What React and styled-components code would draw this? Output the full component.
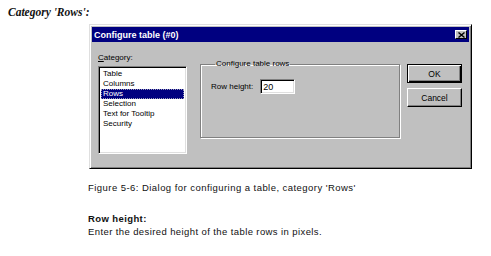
import React from 'react'
import styled, { createGlobalStyle } from 'styled-components'

const Global = createGlobalStyle`
  html, body { margin: 0; padding: 0; background: #fff; }
  body { width: 491px; height: 256px; overflow: hidden; }
`

const Page = styled.div`
  padding: 5px 0 0 8px;
`

const Heading = styled.div`
  font-family: "Liberation Serif", serif;
  font-weight: bold;
  font-style: italic;
  font-size: 11.5px;
  line-height: 15px;
  color: #111;
`

const Dialog = styled.div`
  margin: 4px 0 0 81px;
  width: 383px;
  height: 145px;
  box-sizing: border-box;
  background: #c0c0c0;
  border: 1px solid;
  border-color: #dfdfdf #000 #000 #dfdfdf;
  box-shadow: inset 1px 1px 0 #fff, inset -1px -1px 0 #808080;
  padding: 2px;
  font-family: "Liberation Sans", Arial, sans-serif;
  font-size: 8px;
  color: #000;
`

const TitleBar = styled.div`
  height: 15px;
  background: #000080;
  display: flex;
  align-items: center;
  justify-content: space-between;
  padding: 0 2px 0 2px;
`

const TitleText = styled.span`
  color: #fff;
  font-weight: bold;
  font-size: 9px;
`

const CloseBtn = styled.div`
  width: 12px;
  height: 9px;
  box-sizing: border-box;
  background: #c0c0c0;
  border: 1px solid;
  border-color: #fff #000 #000 #fff;
  display: flex;
  align-items: center;
  justify-content: center;
`

const Body = styled.div`
  display: flex;
  padding: 10px 0 0 6px;
`

const LeftCol = styled.div`
  width: 89px;
  display: flex;
  flex-direction: column;
`

const Label = styled.div`
  line-height: 11px;
  height: 11px;
  margin-bottom: 3px;
`

const ListBox = styled.div`
  height: 88px;
  box-sizing: border-box;
  background: #fff;
  border: 1px solid;
  border-color: #808080 #fff #fff #808080;
  box-shadow: inset 1px 1px 0 #000, inset -1px -1px 0 #dfdfdf;
  padding: 2px 2px;
  display: flex;
  flex-direction: column;
`

const Item = styled.div`
  height: 10px;
  line-height: 10px;
  padding-left: 2px;
  background: ${p => (p.$selected ? '#000080' : 'transparent')};
  color: ${p => (p.$selected ? '#fff' : '#000')};
  outline: ${p => (p.$selected ? '1px dotted #9a9ab8' : 'none')};
  outline-offset: -1px;
`

const Group = styled.fieldset`
  margin: 7px 0 0 13px;
  width: 200px;
  height: 79px;
  box-sizing: border-box;
  border: 1px solid #808080;
  box-shadow: inset 1px 1px 0 #fff, 1px 1px 0 #fff;
  padding: 9px 0 0 10px;
  display: flex;
  align-items: flex-start;
`

const Legend = styled.legend`
  padding: 0 1px;
  margin-left: 4px;
  line-height: 10px;
`

const FieldRow = styled.div`
  display: flex;
  align-items: center;
  gap: 7px;
  margin-top: 1px;
`

const Input = styled.input`
  width: 35px;
  height: 15px;
  box-sizing: border-box;
  border: 1px solid;
  border-color: #808080 #fff #fff #808080;
  box-shadow: inset 1px 1px 0 #000, inset -1px -1px 0 #dfdfdf;
  padding: 0 2px;
  font-family: "Liberation Sans", Arial, sans-serif;
  font-size: 9px;
  outline: none;
`

const Buttons = styled.div`
  margin: 12px 0 0 7px;
  display: flex;
  flex-direction: column;
  gap: 5px;
`

const Button = styled.div`
  width: 55px;
  height: 19px;
  box-sizing: border-box;
  background: #c0c0c0;
  display: flex;
  align-items: center;
  justify-content: center;
  font-size: 8.5px;
  border: 1px solid;
  border-color: ${p => (p.$default ? '#000' : '#fff #000 #000 #fff')};
  box-shadow: ${p =>
    p.$default
      ? 'inset 1px 1px 0 #fff, inset -1px -1px 0 #000, inset -2px -2px 0 #808080'
      : 'inset -1px -1px 0 #808080'};
`

const Text = styled.div`
  font-family: "Liberation Sans", Arial, sans-serif;
  font-size: 9.5px;
  letter-spacing: 0.4px;
  color: #111;
  margin-left: 80px;
  line-height: 13px;
`

const Caption = styled(Text)`
  margin-top: 12px;
  letter-spacing: 0.45px;
`

const Term = styled(Text)`
  font-weight: bold;
  margin-top: 18px;
`

const items = ['Table', 'Columns', 'Rows', 'Selection', 'Text for Tooltip', 'Security']

export default function App() {
  return (
    <Page>
      <Global />
      <Heading>Category 'Rows':</Heading>
      <Dialog>
        <TitleBar>
          <TitleText>Configure table (#0)</TitleText>
          <CloseBtn>
            <svg width="7" height="6" viewBox="0 0 7 6">
              <path d="M0.5 0.5 L6.5 5.5 M6.5 0.5 L0.5 5.5" stroke="#000" strokeWidth="1.4" />
            </svg>
          </CloseBtn>
        </TitleBar>
        <Body>
          <LeftCol>
            <Label><u>C</u>ategory:</Label>
            <ListBox>
              {items.map(it => (
                <Item key={it} $selected={it === 'Rows'}>{it}</Item>
              ))}
            </ListBox>
          </LeftCol>
          <Group>
            <Legend>Configure table rows</Legend>
            <FieldRow>
              <span>Row height:</span>
              <Input value="20" readOnly />
            </FieldRow>
          </Group>
          <Buttons>
            <Button $default>OK</Button>
            <Button>Cancel</Button>
          </Buttons>
        </Body>
      </Dialog>
      <Caption>Figure 5-6: Dialog for configuring a table, category 'Rows'</Caption>
      <Term>Row height:</Term>
      <Text>Enter the desired height of the table rows in pixels.</Text>
    </Page>
  )
}
